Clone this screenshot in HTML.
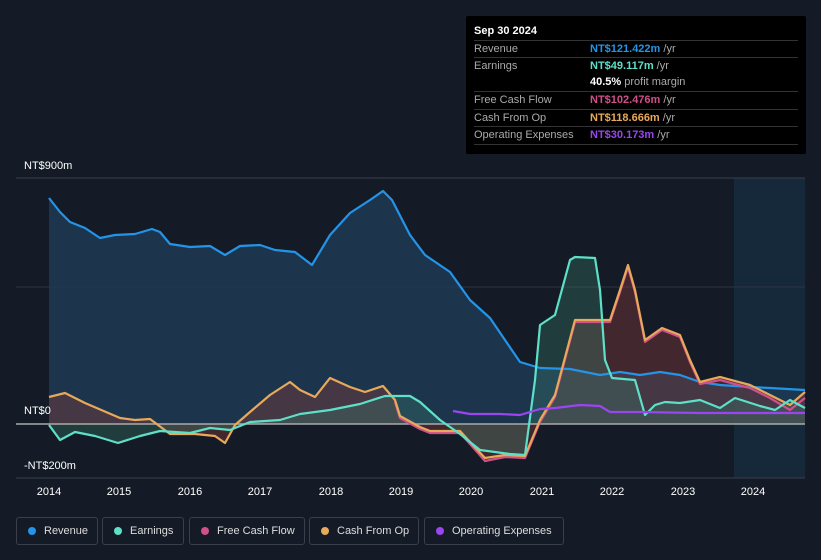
<!DOCTYPE html><html><head><style>
body{margin:0;width:821px;height:560px;background:#151b26;font-family:"Liberation Sans",sans-serif;overflow:hidden;position:relative}
.t{position:absolute;color:#fff;font-size:11px}
#tip{position:absolute;left:466px;top:16px;width:340px;height:138px;background:#000;border-radius:2px}
#tip .r{position:absolute;left:8px;width:324px;border-top:1px solid #333;font-size:11px;color:#aaa;height:17px;line-height:17px}
#tip .v{position:absolute;left:116px;top:0;font-weight:bold;white-space:nowrap}
#tip .v span{font-weight:normal;color:#aaa}
.lg{position:absolute;top:517px;height:28px;border:1px solid #3a3f4a;border-radius:3px;color:#ddd;font-size:11px;line-height:26px;box-sizing:border-box;padding-left:27px}
.lg i{position:absolute;left:11px;top:9px;width:8px;height:8px;border-radius:50%}
</style></head><body>
<svg width="821" height="560" style="position:absolute;left:0;top:0">
<rect x="734" y="178" width="71" height="300" fill="#16293a"/>
<line x1="16" y1="178" x2="805" y2="178" stroke="#3a404c"/>
<line x1="16" y1="287" x2="805" y2="287" stroke="#2e3440"/>
<line x1="16" y1="478" x2="805" y2="478" stroke="#3a404c"/>
<path d="M49,198 L60,212 L70,222 L85,228 L100,238 L115,235 L135,234 L152,229 L160,232 L170,244 L190,247 L210,246 L225,255 L240,246 L260,245 L275,250 L295,252 L312,265 L330,235 L350,213 L370,200 L383,191 L392,200 L410,235 L425,255 L450,272 L470,300 L490,318 L505,340 L520,362 L540,368 L570,369 L600,375 L620,372 L640,375 L660,372 L680,375 L700,382 L720,385 L750,387 L770,388 L805,390 L805,424 L49,424Z" fill="#1d3a55" opacity="0.85"/>
<path d="M49,397 L65,393 L85,403 L120,418 L135,420 L150,419 L170,434 L195,434 L215,436 L225,443 L235,425 L250,412 L270,395 L290,382 L300,390 L315,397 L330,378 L350,387 L365,392 L383,386 L395,400 L400,416 L420,427 L430,431 L460,431 L470,442 L485,458 L505,455 L525,456 L540,420 L555,395 L575,320 L610,320 L620,290 L628,265 L635,290 L645,340 L662,328 L680,335 L690,360 L700,382 L720,377 L750,385 L770,395 L790,405 L805,392 L805,424 L49,424Z" fill="#7a3a3a" opacity="0.45"/>
<path d="M49,425 L60,440 L75,432 L95,436 L118,443 L140,436 L160,431 L190,433 L210,428 L230,430 L250,422 L280,420 L300,414 L330,410 L360,404 L385,396 L410,396 L420,402 L440,420 L460,434 L480,450 L510,454 L525,455 L535,380 L540,325 L555,315 L570,260 L575,257 L595,258 L600,290 L605,360 L612,378 L635,380 L645,415 L655,405 L665,402 L680,403 L700,400 L720,408 L735,398 L760,406 L775,410 L790,400 L805,408 L805,424 L49,424Z" fill="#3a7a6a" opacity="0.35"/>
<line x1="16" y1="424" x2="805" y2="424" stroke="#aaa" stroke-width="1.5"/>
<g fill="none" stroke-width="2.2" stroke-linejoin="round">
<path stroke="#2394e8" d="M49,198 L60,212 L70,222 L85,228 L100,238 L115,235 L135,234 L152,229 L160,232 L170,244 L190,247 L210,246 L225,255 L240,246 L260,245 L275,250 L295,252 L312,265 L330,235 L350,213 L370,200 L383,191 L392,200 L410,235 L425,255 L450,272 L470,300 L490,318 L505,340 L520,362 L540,368 L570,369 L600,375 L620,372 L640,375 L660,372 L680,375 L700,382 L720,385 L750,387 L770,388 L805,390"/>
<path stroke="#d14f8a" d="M395,402 L400,418 L420,429 L430,433 L460,433 L470,444 L485,461 L505,457 L525,458 L540,422 L555,397 L575,322 L610,322 L620,292 L628,267 L635,292 L645,342 L662,330 L680,337 L690,362 L700,384 L720,380 L750,388 L770,398 L790,410 L805,398"/>
<path stroke="#e8a95a" d="M49,397 L65,393 L85,403 L120,418 L135,420 L150,419 L170,434 L195,434 L215,436 L225,443 L235,425 L250,412 L270,395 L290,382 L300,390 L315,397 L330,378 L350,387 L365,392 L383,386 L395,400 L400,416 L420,427 L430,431 L460,431 L470,442 L485,458 L505,455 L525,456 L540,420 L555,395 L575,320 L610,320 L620,290 L628,265 L635,290 L645,340 L662,328 L680,335 L690,360 L700,382 L720,377 L750,385 L770,395 L790,405 L805,392"/>
<path stroke="#5ee0c8" d="M49,425 L60,440 L75,432 L95,436 L118,443 L140,436 L160,431 L190,433 L210,428 L230,430 L250,422 L280,420 L300,414 L330,410 L360,404 L385,396 L410,396 L420,402 L440,420 L460,434 L480,450 L510,454 L525,455 L535,380 L540,325 L555,315 L570,260 L575,257 L595,258 L600,290 L605,360 L612,378 L635,380 L645,415 L655,405 L665,402 L680,403 L700,400 L720,408 L735,398 L760,406 L775,410 L790,400 L805,408"/>
<path stroke="#9b45f0" d="M453,411 L470,414 L500,414 L520,415 L540,409 L555,408 L580,405 L600,406 L610,412 L640,412 L700,413 L805,413"/>
</g>
<g fill="#fff" font-size="11" font-family="Liberation Sans" text-anchor="middle">
<text x="49" y="495">2014</text><text x="119" y="495">2015</text><text x="190" y="495">2016</text><text x="260" y="495">2017</text><text x="331" y="495">2018</text><text x="401" y="495">2019</text><text x="471" y="495">2020</text><text x="542" y="495">2021</text><text x="612" y="495">2022</text><text x="683" y="495">2023</text><text x="753" y="495">2024</text>
</g>
</svg>
<div class="t" style="left:24px;top:160px">NT$900m</div>
<div class="t" style="left:24px;top:405px">NT$0</div>
<div class="t" style="left:24px;top:460px">-NT$200m</div>
<div id="tip">
<div style="position:absolute;left:8px;top:9px;color:#fff;font-size:11px;font-weight:bold">Sep 30 2024</div>
<div class="r" style="top:24px">Revenue<div class="v" style="color:#2394e8">NT$121.422m <span>/yr</span></div></div>
<div class="r" style="top:41px">Earnings<div class="v" style="color:#5ee0c8">NT$49.117m <span>/yr</span></div></div>
<div class="r" style="top:58px;border-top:none"><div class="v" style="color:#fff">40.5% <span>profit margin</span></div></div>
<div class="r" style="top:75px">Free Cash Flow<div class="v" style="color:#d14f8a">NT$102.476m <span>/yr</span></div></div>
<div class="r" style="top:93px">Cash From Op<div class="v" style="color:#e8a95a">NT$118.666m <span>/yr</span></div></div>
<div class="r" style="top:110px;border-bottom:1px solid #333">Operating Expenses<div class="v" style="color:#9b45f0">NT$30.173m <span>/yr</span></div></div>
</div>
<div class="lg" style="left:16px;width:82px"><i style="background:#2394e8"></i>Revenue</div>
<div class="lg" style="left:102px;width:82px"><i style="background:#5ee0c8"></i>Earnings</div>
<div class="lg" style="left:189px;width:116px"><i style="background:#d14f8a"></i>Free Cash Flow</div>
<div class="lg" style="left:309px;width:110px"><i style="background:#e8a95a"></i>Cash From Op</div>
<div class="lg" style="left:424px;width:140px"><i style="background:#9b45f0"></i>Operating Expenses</div>
</body></html>
